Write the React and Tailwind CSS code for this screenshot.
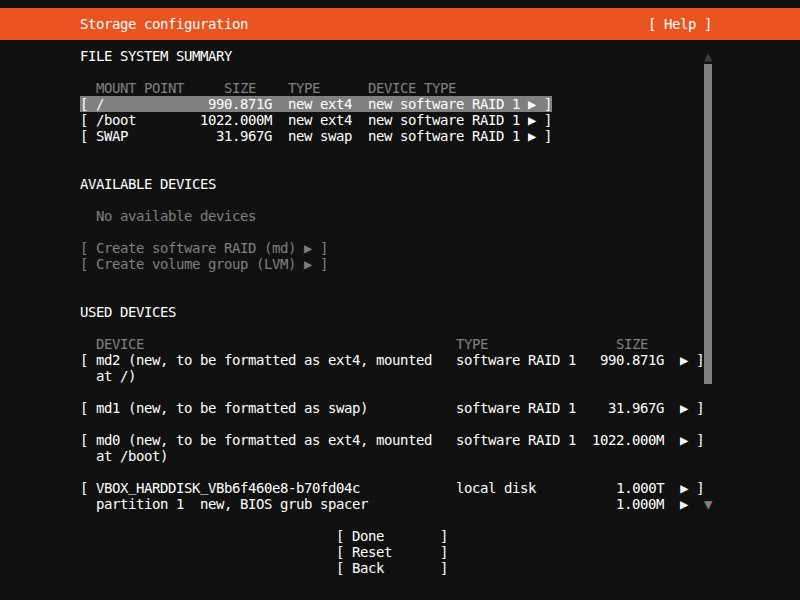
import React from 'react';

const G = 'text-[#808080]';
const SB = 'bg-[#808080]';

function compose(parts, start) {
  let s = '';
  let cur = start;
  parts.forEach(([col, text]) => {
    if (col > cur) s += ' '.repeat(col - cur);
    s += text;
    cur = col + [...text].length;
  });
  return s;
}

function Txt({ text }) {
  const pieces = text.split('_');
  return pieces.map((p, i) => (
    <React.Fragment key={i}>
      {p}
      {i < pieces.length - 1 && <span className="inline-block -translate-y-[2px]">_</span>}
    </React.Fragment>
  ));
}

function Line({ segs = [] }) {
  let cur = 0;
  const out = [];
  segs.forEach(([col, text, cls], i) => {
    if (col > cur) out.push(' '.repeat(col - cur));
    out.push(
      <span key={i} className={cls}>
        <Txt text={text} />
      </span>
    );
    cur = col + [...text].length;
  });
  return <div className="h-[16px] leading-[16px] whitespace-pre">{out}</div>;
}

const sb = [88, ' ', SB];

const rows = [
  // r3
  [[10, 'FILE SYSTEM SUMMARY'], [88, '▲', 'text-[#3a3a3a]']],
  [sb],
  [[12, 'MOUNT POINT', G], [28, 'SIZE', G], [36, 'TYPE', G], [46, 'DEVICE TYPE', G], sb],
  [
    [10, compose([[10, '[ /'], [26, '990.871G'], [36, 'new ext4'], [46, 'new software RAID 1 ▶ ]']], 10), 'bg-[#808080]'],
    sb,
  ],
  [[10, compose([[10, '[ /boot'], [25, '1022.000M'], [36, 'new ext4'], [46, 'new software RAID 1 ▶ ]']], 10)], sb],
  [[10, compose([[10, '[ SWAP'], [27, '31.967G'], [36, 'new swap'], [46, 'new software RAID 1 ▶ ]']], 10)], sb],
  [sb],
  [sb],
  // r11
  [[10, 'AVAILABLE DEVICES'], sb],
  [sb],
  [[12, 'No available devices', G], sb],
  [sb],
  [[10, '[ Create software RAID (md) ▶ ]', G], sb],
  [[10, '[ Create volume group (LVM) ▶ ]', G], sb],
  [sb],
  [sb],
  // r19
  [[10, 'USED DEVICES'], sb],
  [sb],
  [[12, 'DEVICE', G], [57, 'TYPE', G], [77, 'SIZE', G], sb],
  [[10, '[ md2 (new, to be formatted as ext4, mounted'], [57, 'software RAID 1'], [75, '990.871G'], [85, '▶'], [87, ']'], sb],
  [[12, 'at /)'], sb],
  [],
  [[10, '[ md1 (new, to be formatted as swap)'], [57, 'software RAID 1'], [76, '31.967G'], [85, '▶'], [87, ']']],
  [],
  [[10, '[ md0 (new, to be formatted as ext4, mounted'], [57, 'software RAID 1'], [74, '1022.000M'], [85, '▶'], [87, ']']],
  [[12, 'at /boot)']],
  [],
  [[10, '[ VBOX_HARDDISK_VBb6f460e8-b70fd04c'], [57, 'local disk'], [77, '1.000T'], [85, '▶'], [87, ']']],
  [[12, 'partition 1  new, BIOS grub spacer'], [77, '1.000M'], [85, '▶'], [88, '▼', G]],
  [],
  [[42, '[ Done       ]']],
  [[42, '[ Reset      ]']],
  [[42, '[ Back       ]']],
];

export default function App() {
  return (
    <div className="w-[800px] h-[600px] overflow-hidden bg-[#111111] text-white font-['DejaVu_Sans_Mono',monospace] text-[14px] tracking-[-0.4287px]">
      <div className="mt-[8px] h-[32px] bg-[#E95420] flex items-center">
        <div className="w-full">
          <Line segs={[[10, 'Storage configuration'], [81, '[ Help ]']]} />
        </div>
      </div>
      <div className="pt-[8px]">
        {rows.map((segs, i) => (
          <Line key={i} segs={segs} />
        ))}
      </div>
    </div>
  );
}
